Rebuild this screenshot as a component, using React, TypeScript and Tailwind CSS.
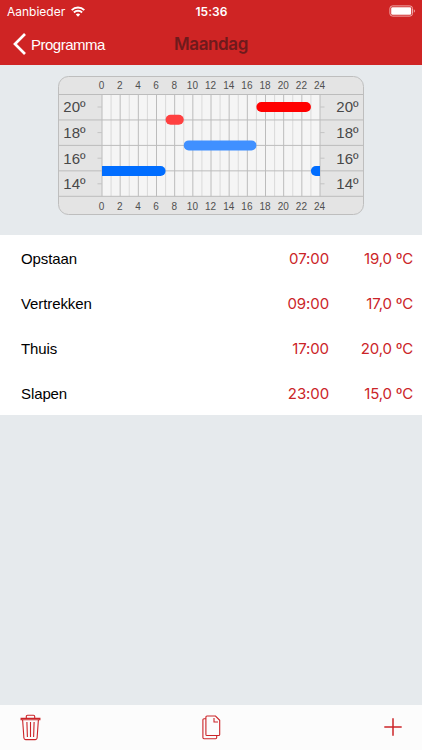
import { Fragment } from "react";

type Moment = { label: string; time: string; temp: string };

type Segment = { from: number; to: number; temp: number; color: string };

const MOMENTS: Moment[] = [
  { label: "Opstaan", time: "07:00", temp: "19,0 ºC" },
  { label: "Vertrekken", time: "09:00", temp: "17,0 ºC" },
  { label: "Thuis", time: "17:00", temp: "20,0 ºC" },
  { label: "Slapen", time: "23:00", temp: "15,0 ºC" },
];

const SEGMENTS: Segment[] = [
  { from: 0, to: 7, temp: 15, color: "#006dff" },
  { from: 7, to: 9, temp: 19, color: "#ff4040" },
  { from: 9, to: 17, temp: 17, color: "#4090ff" },
  { from: 17, to: 23, temp: 20, color: "#ff0000" },
  { from: 23, to: 24, temp: 15, color: "#006dff" },
];

// chart geometry, relative to the svg
const LEFT = 44;
const RIGHT = 262;
const TOP = 18.5;
const BOTTOM = 120.3;
const hourX = (h: number) => LEFT + (h * (RIGHT - LEFT)) / 24;
const tempY = (t: number) => TOP + 12.5 + (20 - t) * 12.8;

function StatusBar() {
  return (
    <div className="flex h-[22px] items-center justify-between pl-[7px] pr-1.5 text-white">
      <div className="flex flex-1 items-center gap-1.5">
        <span className="pt-px font-['Inter','Liberation_Sans',sans-serif] text-[12px] leading-none">Aanbieder</span>
        <svg width="14" height="11" viewBox="0 0 14 11" fill="none" stroke="currentColor" strokeWidth="1.9">
          <path d="M.7 4.1a9 9 0 0 1 12.6 0" />
          <path d="M2.9 6.5a5.8 5.8 0 0 1 8.2 0" />
          <path d="M7 10.7 4.8 8.5a3.1 3.1 0 0 1 4.4 0z" fill="currentColor" stroke="none" />
        </svg>
      </div>
      <span className="pt-px font-['Inter','Liberation_Sans',sans-serif] text-[12px] font-semibold leading-none tracking-[0.1px]">
        15:36
      </span>
      <div className="flex flex-1 justify-end">
        <svg width="27" height="12" viewBox="0 0 27 12" fill="none">
          <rect x=".9" y=".9" width="22.6" height="10.2" rx="2.6" stroke="#f0a9a9" strokeWidth="1" />
          <rect x="2.2" y="2.2" width="20" height="7.6" rx="1.3" fill="#fff" />
          <path d="M24.8 4.2v3.6c1.5-.6 1.5-3 0-3.6z" fill="#f0a9a9" />
        </svg>
      </div>
    </div>
  );
}

function NavBar() {
  return (
    <div className="grid h-[43px] grid-cols-3 items-center">
      <button className="flex items-center gap-[3px] pl-[13px] text-white">
        <svg width="15" height="22" viewBox="0 0 15 22" fill="none" stroke="currentColor" strokeWidth="2.7">
          <path d="M12 1 2 11l10 10" />
        </svg>
        <span className="pt-px font-['Liberation_Sans',sans-serif] text-[15px] leading-none tracking-[-0.5px]">
          Programma
        </span>
      </button>
      <h1 className="pt-0.5 text-center font-['Inter','Liberation_Sans',sans-serif] text-[17px] font-semibold leading-none tracking-[-0.4px] text-[#6e1a1c]">
        Maandag
      </h1>
    </div>
  );
}

function DayChart() {
  const hours = Array.from({ length: 25 }, (_, i) => i);

  return (
    <svg width="306" height="140" viewBox="0 0 306 140" fontFamily="'Liberation Sans', sans-serif">
      <defs>
        <clipPath id="plot">
          <rect x={LEFT} y={TOP} width={RIGHT - LEFT} height={BOTTOM - TOP} />
        </clipPath>
      </defs>
      <rect x=".5" y=".5" width="305" height="138" rx="10" fill="#e4e4e4" stroke="#bebebe" />
      <rect x={LEFT} y={TOP} width={RIGHT - LEFT} height={BOTTOM - TOP} fill="#f5f5f5" />

      {hours.map((h) => (
        <Fragment key={h}>
          <line
            x1={hourX(h)}
            x2={hourX(h)}
            y1={TOP}
            y2={BOTTOM}
            stroke={h % 2 === 0 ? "#bcbcbc" : "#dadada"}
            strokeWidth="1"
          />
          {h % 2 === 0 && (
            <g fontSize="10" fill="#505050" textAnchor="middle">
              <text x={hourX(h) - 0.4} y="12.6">{h}</text>
              <text x={hourX(h) - 0.4} y="133.6">{h}</text>
            </g>
          )}
        </Fragment>
      ))}

      {[0, 1, 2, 3, 4].map((i) => (
        <line key={i} x1="1" x2="305" y1={TOP + i * 25.45} y2={TOP + i * 25.45} stroke="#bcbcbc" />
      ))}

      {[20, 18, 16, 14].map((t) => (
        <g key={t}>
          <line x1={LEFT - 4.5} x2={LEFT} y1={tempY(t)} y2={tempY(t)} stroke="#c4c4c4" />
          <line x1={RIGHT} x2={RIGHT + 4.5} y1={tempY(t)} y2={tempY(t)} stroke="#c4c4c4" />
          <text x="5.3" y={tempY(t) + 5.4} fontSize="15" fill="#484848">{t}º</text>
          <text x="278.3" y={tempY(t) + 5.4} fontSize="15" fill="#484848">{t}º</text>
        </g>
      ))}

      <g clipPath="url(#plot)">
        {SEGMENTS.map((s) => {
          // segments touching midnight run on past the edge and are clipped flat
          const x1 = s.from === 0 ? LEFT - 10 : hourX(s.from);
          const x2 = s.to === 24 ? RIGHT + 10 : hourX(s.to);
          return <rect key={s.from} x={x1} y={tempY(s.temp) - 5} width={x2 - x1} height="10" rx="5" fill={s.color} />;
        })}
      </g>
    </svg>
  );
}

function MomentRow({ label, time, temp }: Moment) {
  return (
    <li className="flex h-[44.9px] items-center pl-[21px] pr-[9px] leading-none">
      <span className="flex-1 pt-0.5 font-['Liberation_Sans',sans-serif] text-[15px] tracking-[-0.1px] text-black">
        {label}
      </span>
      <span className="pt-[3px] font-['Inter','Liberation_Sans',sans-serif] text-[15px] tracking-[-0.1px] text-[#cb2428]">
        {time}
      </span>
      <span className="w-[84px] pt-0.5 text-right font-['Inter','Liberation_Sans',sans-serif] text-[15px] tracking-[-0.2px] text-[#cb2428]">
        {temp}
      </span>
    </li>
  );
}

function Toolbar() {
  return (
    <footer className="flex h-[45px] items-center justify-between bg-[#fcfcfc] pl-5 pr-5 text-[#cb2428]">
      <button aria-label="Verwijder">
        <svg width="21" height="27" viewBox="0 0 21 27" fill="none" stroke="currentColor" strokeWidth="1.1">
          <path d="M1.1 4.4h18.8v1.3H1.100zM6.300 4.400V2.500q0-1.200 1.200-1.200h6q1.200 0 1.200 1.200v1.900" />
          <path d="M2.600 5.700 3.900 24q.2 1.600 1.700 1.600h9.800q1.500 0 1.700-1.600l1.300-18.300M6.900 8l.5 15M10.500 8v15M14.100 8l-.5 15" />
        </svg>
      </button>
      <button aria-label="Kopieer" className="-ml-0.5">
        <svg width="19" height="25" viewBox="0 0 19 25" fill="none" stroke="currentColor" strokeWidth="1.1">
          <path d="M5 1h8.500l4.200 4.300v14.100q0 1.100-1.100 1.100H5q-1.100 0-1.100-1.100V2.100Q3.900 1 5 1z" />
          <path d="M12 3v4h4M3.900 3.800H2q-1.100 0-1.100 1.100v17.700q0 1.100 1.100 1.100h11.600q1.100 0 1.100-1.100v-2.100" />
        </svg>
      </button>
      <button aria-label="Voeg toe" className="pb-0.5">
        <svg width="18" height="18" viewBox="0 0 18 18" fill="none" stroke="currentColor" strokeWidth="1.5">
          <path d="M9 .3v17.400M.3 9h17.400" />
        </svg>
      </button>
    </footer>
  );
}

export default function App() {
  return (
    <div className="flex h-[750px] w-[422px] flex-col overflow-hidden bg-[#e6eaed]">
      <header className="bg-[#cf2424]">
        <StatusBar />
        <NavBar />
      </header>

      <main className="flex-1">
        <div className="flex h-[170px] justify-center pt-[11px]">
          <DayChart />
        </div>
        <ul className="bg-white">
          {MOMENTS.map((m) => (
            <MomentRow key={m.label} {...m} />
          ))}
        </ul>
      </main>

      <Toolbar />
    </div>
  );
}
